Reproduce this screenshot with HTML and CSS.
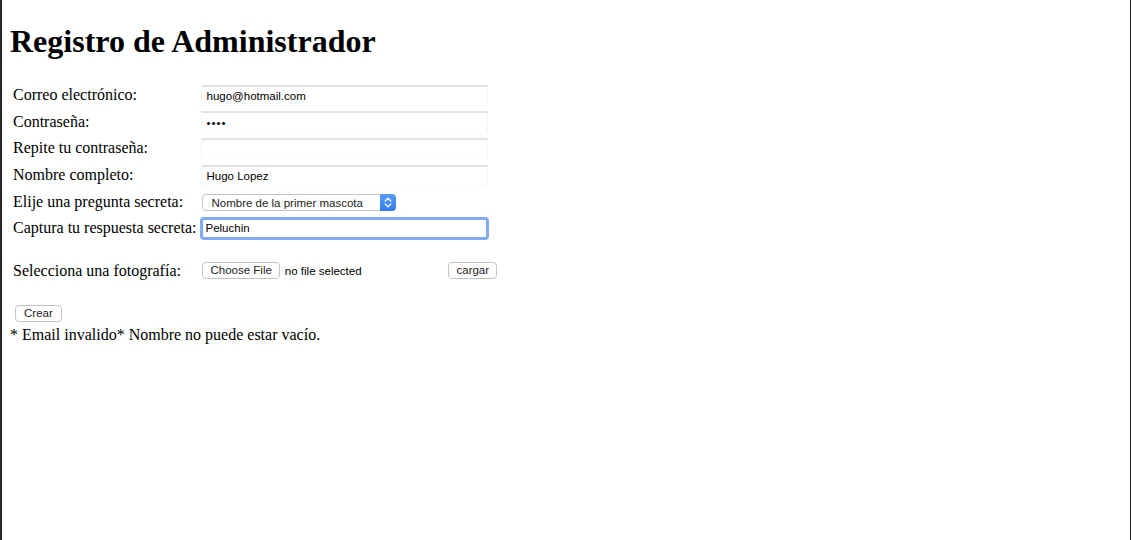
FILE: index.html
```html
<!DOCTYPE html>
<html lang="es">
<head>
<meta charset="utf-8">
<title>Registro de Administrador</title>
<link rel="stylesheet" href="styles.css">
</head>
<body>
<h1>Registro de Administrador</h1>
<form class="form">
<table class="grid">
  <tr class="row">
    <td class="label">Correo electrónico:</td>
    <td class="field"><input class="text" type="text" value="hugo@hotmail.com"></td>
  </tr>
  <tr class="row">
    <td class="label">Contraseña:</td>
    <td class="field"><input class="text pass" type="password" value="hugo"></td>
  </tr>
  <tr class="row">
    <td class="label">Repite tu contraseña:</td>
    <td class="field"><input class="text" type="password" value=""></td>
  </tr>
  <tr class="row">
    <td class="label">Nombre completo:</td>
    <td class="field"><input class="text" type="text" value="Hugo Lopez"></td>
  </tr>
  <tr class="row">
    <td class="label">Elije una pregunta secreta:</td>
    <td class="field">
      <span class="select-wrap">
        <select class="select">
          <option>Nombre de la primer mascota</option>
        </select>
        <span class="select-arrow">
          <svg width="8" height="11" viewBox="0 0 8 11"><path d="M1.2 4 L4 1.3 L6.8 4 M1.2 7 L4 9.7 L6.8 7" fill="none" stroke="#fff" stroke-width="1.3" stroke-linecap="round" stroke-linejoin="round"/></svg>
        </span>
      </span>
    </td>
  </tr>
  <tr class="row">
    <td class="label">Captura tu respuesta secreta:</td>
    <td class="field"><input class="text focused" type="text" value="Peluchin"></td>
  </tr>
  <tr class="spacer"><td></td><td></td></tr>
  <tr class="row">
    <td class="label">Selecciona una fotografía:</td>
    <td class="field file-cell">
      <span class="file">
        <button type="button" class="btn">Choose File</button>
        <span class="file-name">no file selected</span>
      </span>
      <button type="button" class="btn">cargar</button>
    </td>
  </tr>
  <tr class="spacer small"><td></td><td></td></tr>
  <tr class="row-btn">
    <td><button type="button" class="btn create">Crear</button></td>
    <td></td>
  </tr>
</table>
</form>
<div class="errors">* Email invalido* Nombre no puede estar vacío.</div>
</body>
</html>
```

FILE: styles.css
```css
html {
  height: 100%;
  box-sizing: border-box;
  border-left: 2px solid #262626;
  border-right: 1px solid #262626;
  background: #fff;
}
body {
  margin: 8px;
  font-family: "Liberation Serif", "Times New Roman", serif;
  font-size: 16px;
  color: #000;
}
h1 {
  font-size: 32px;
  font-weight: bold;
  margin: 14.5px 0 21.44px;
}
.form {
  margin: 0;
}
.grid {
  border-spacing: 2px;
}
.grid td {
  padding: 1px;
  vertical-align: middle;
}
.row td {
  height: 22.6px;
}
.label {
  white-space: nowrap;
  padding-top: 2px;
}
.text {
  box-sizing: border-box;
  width: 287px;
  height: 21px;
  margin: 0 0 0 1px;
  padding: 1px 4px 0;
  border: 1px solid #f3f3f3;
  border-top: 2px solid #e2e2e2;
  border-bottom-color: #fafafa;
  background: #fff;
  font-family: "Liberation Sans", Arial, sans-serif;
  font-size: 11.5px;
  color: #000;
  display: block;
}
.pass {
  letter-spacing: 1px;
}
.text.focused {
  width: 289px;
  height: 23px;
  margin-left: 0;
  border: 3px solid #80abf5;
  border-radius: 4px;
  padding: 0 2px;
  outline: none;
}
.select-wrap {
  position: relative;
  display: inline-block;
  margin-left: 2px;
  vertical-align: middle;
}
.select {
  -webkit-appearance: none;
  appearance: none;
  box-sizing: border-box;
  width: 194px;
  height: 17px;
  margin: 0;
  padding: 0 20px 0 8px;
  border: 1px solid #c6c6c6;
  border-radius: 4px;
  background: #fff;
  font-family: "Liberation Sans", Arial, sans-serif;
  font-size: 11.5px;
  color: #222;
  display: block;
}
.select-arrow {
  position: absolute;
  right: 0;
  top: 0;
  width: 16px;
  height: 17px;
  border-radius: 0 4px 4px 0;
  background: linear-gradient(#5a9cf8, #2f7bf0);
  display: flex;
  align-items: center;
  justify-content: center;
}
.spacer td {
  height: 13.4px;
  padding: 0;
}
.spacer.small td {
  height: 15px;
}
.file-cell {
  display: flex;
  align-items: center;
  gap: 4px;
  white-space: nowrap;
}
.file {
  display: inline-flex;
  align-items: center;
  width: 242px;
  margin-left: 2px;
}
.file-name {
  font-family: "Liberation Sans", Arial, sans-serif;
  font-size: 11.5px;
  color: #000;
  margin-left: 5px;
}
.btn {
  box-sizing: border-box;
  height: 17px;
  margin: 0;
  padding: 0 7px;
  border: 1px solid #c4c4c4;
  border-radius: 4px;
  background: #fff;
  font-family: "Liberation Sans", Arial, sans-serif;
  font-size: 11.5px;
  color: #222;
  line-height: 15px;
}
.create {
  margin-left: 2px;
  padding: 0 8px;
}
.row-btn td {
  height: 20px;
  vertical-align: top;
}
.errors {
  margin-top: 0;
}
```
